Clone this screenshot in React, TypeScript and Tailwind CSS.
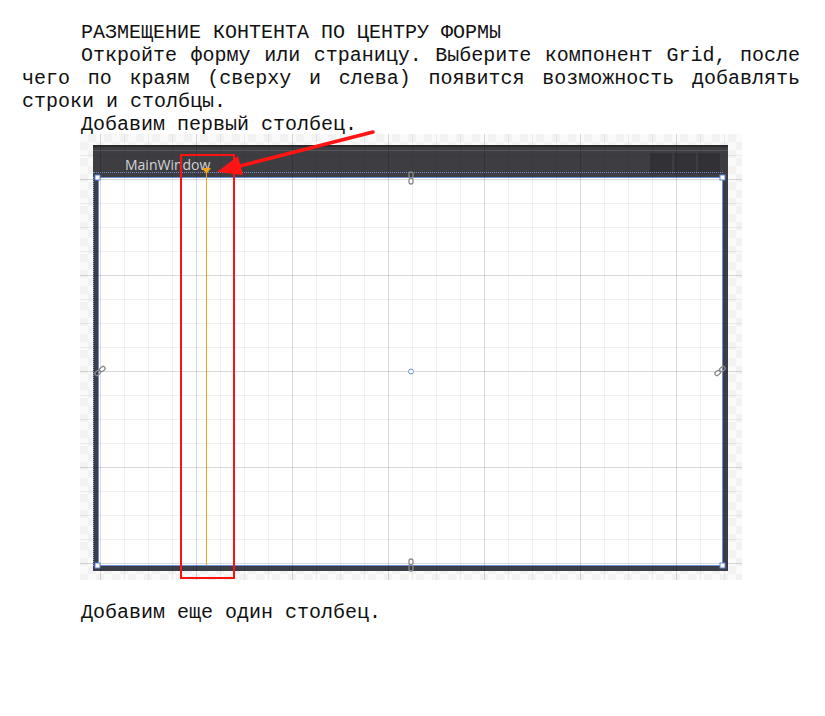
import React from 'react'

const Handle = ({ x, y }: { x: number; y: number }) => (
  <rect x={x - 2.5} y={y - 2.5} width={5} height={5} fill="#ffffff" stroke="#5f86d4" strokeWidth={1} />
)

// little chain glyph the designer puts on the middle of each edge
const Link = ({ x, y, rotate }: { x: number; y: number; rotate: number }) => (
  <g transform={`translate(${x} ${y}) rotate(${rotate})`} fill="none" stroke="#8a8a8a" strokeWidth={1.3}>
    <rect x={-2} y={-6} width={4} height={6} rx={2} />
    <rect x={-2} y={0} width={4} height={6} rx={2} />
  </g>
)

const DesignerShot = () => {
  return (
    <div className="relative w-[662px] h-[446px] pl-[13px] pt-[11px] bg-[image:repeating-conic-gradient(#f2f2f2_0%_25%,#fafafa_0%_50%)] bg-[size:16px_16px]">
      <div className="relative w-[635px] h-[426px] flex flex-col bg-[#3b3e47]">
        <div className="h-[32px] flex flex-col bg-[#3d3d42]">
          <div className="h-[2px] bg-[#2a2a2d]" />
          <div className="h-[3px]" />
          <div className="h-px bg-[#56565b]" />
          <div className="flex-1 flex items-start justify-between pl-[32px] pr-[8px]">
            <span className="mt-[4px] font-['Open_Sans',sans-serif] text-[14px] leading-[20px] text-[#d4d4d6]">MainWindow</span>
            <div className="flex gap-[2px] mt-[2px]">
              <div className="w-[22px] h-[21px] bg-[#323236]" />
              <div className="w-[22px] h-[21px] bg-[#333337]" />
              <div className="w-[22px] h-[21px] bg-[#323236]" />
            </div>
          </div>
        </div>
        <div className="flex-1 flex px-[5px] pb-[5px]">
          <div className="flex-1 bg-white border border-[#6b8ed6]" />
        </div>
        {/* selection adorners */}
        <div className="absolute left-0 right-[5px] top-[27px] border-t border-dotted border-[#6f8fd6]" />
        <div className="absolute left-0 top-[32px] bottom-[5px] border-l border-dotted border-[#8aa6dd]" />
      </div>

      {/* designer grid */}
      <div className="absolute inset-0 pointer-events-none bg-[image:linear-gradient(to_right,rgba(0,0,0,0.09)_1px,transparent_1px),linear-gradient(to_bottom,rgba(0,0,0,0.09)_1px,transparent_1px),linear-gradient(to_right,rgba(0,0,0,0.06)_1px,transparent_1px),linear-gradient(to_bottom,rgba(0,0,0,0.06)_1px,transparent_1px)] bg-[size:96px_96px,96px_96px,24px_24px,24px_24px] bg-[position:20px_45px]" />

      <svg className="absolute left-0 top-0 overflow-visible pointer-events-none" width={662} height={446}>
        <rect x={101} y={21} width={53} height={423} fill="none" stroke="#ff1111" strokeWidth={2} />
        <line x1={126.5} y1={38} x2={126.5} y2={431} stroke="#f3a317" strokeWidth={1} />
        <polygon points="122,34 131,34 126.5,40" fill="#f3a317" />
        <Handle x={17.5} y={43.5} />
        <Handle x={642.5} y={43.5} />
        <Handle x={17.5} y={431.5} />
        <Handle x={642.5} y={431.5} />
        <Link x={331} y={44} rotate={0} />
        <Link x={331} y={431} rotate={0} />
        <Link x={20} y={237} rotate={50} />
        <Link x={640} y={237} rotate={50} />
        <circle cx={331} cy={237.5} r={2.5} fill="#ffffff" stroke="#6b8ed6" strokeWidth={1} />
        <line x1={293} y1={-2} x2={156} y2={33} stroke="#ff1414" strokeWidth={3.5} strokeLinecap="round" />
        <polygon points="137,38 158,22 163,41" fill="#ff1414" />
      </svg>
    </div>
  )
}

export default function App() {
  return (
    <div className="w-[825px] h-[716px] bg-white text-[#111] font-['Liberation_Mono','Courier_New',monospace] text-[20px] leading-[23px]">
      <div className="w-[800px] pl-[22px] pt-[21px]">
        <p className="indent-[59px] text-justify">РАЗМЕЩЕНИЕ КОНТЕНТА ПО ЦЕНТРУ ФОРМЫ</p>
        <p className="indent-[59px] text-justify">
          Откройте форму или страницу. Выберите компонент Grid, после чего по краям (сверху и слева) появится возможность добавлять строки и столбцы.
        </p>
        <p className="indent-[59px] text-justify">Добавим первый столбец.</p>
        <div className="ml-[58px] -mt-[2px]">
          <DesignerShot />
        </div>
        <p className="indent-[59px] mt-[21px]">Добавим еще один столбец.</p>
      </div>
    </div>
  )
}
